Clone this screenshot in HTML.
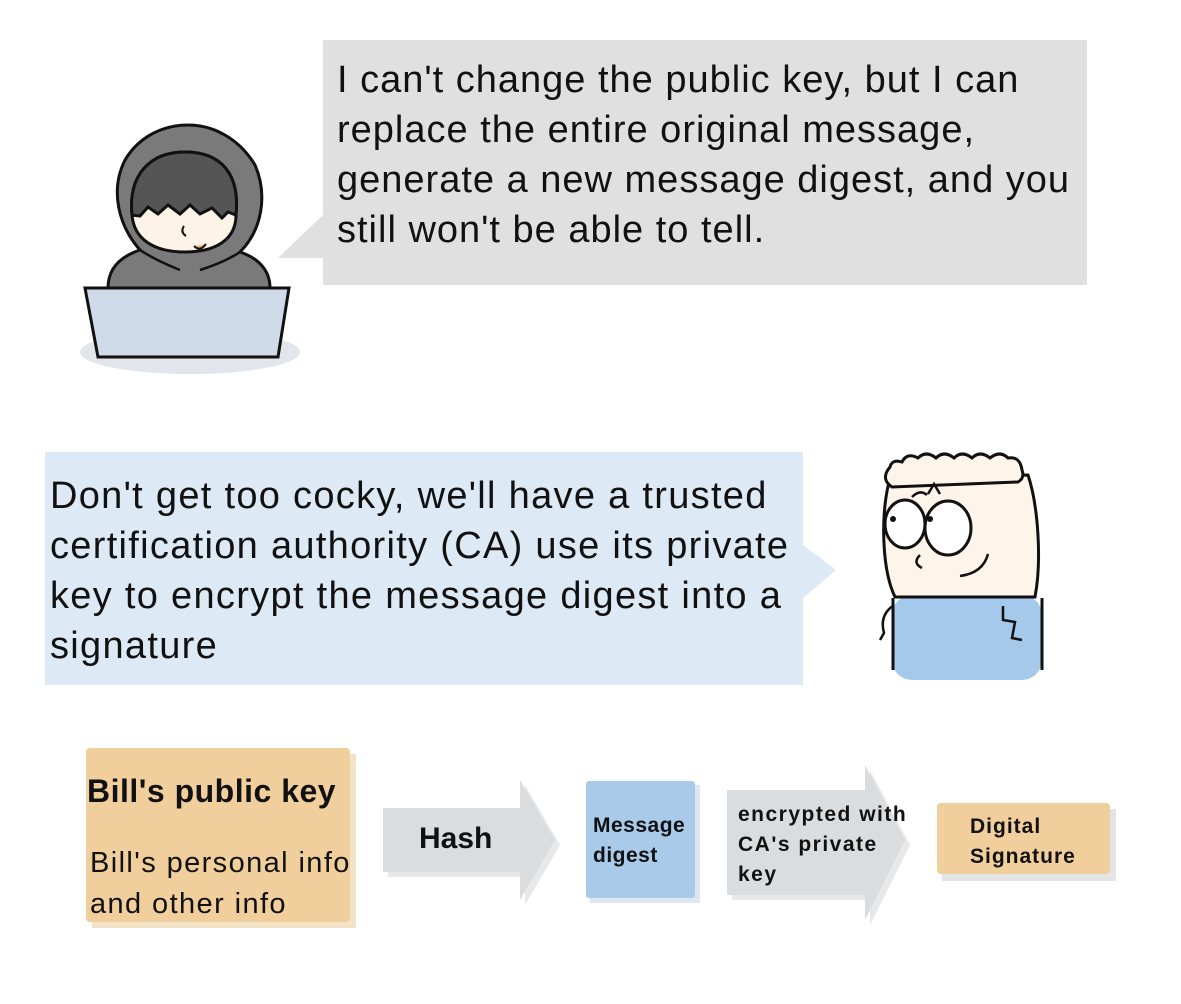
<!DOCTYPE html>
<html><head><meta charset="utf-8"><style>
body{margin:0;width:1181px;height:1004px;background:#fff;position:relative;overflow:hidden;font-family:"Liberation Sans","DejaVu Sans",sans-serif}
.t{position:absolute;font-size:38px;line-height:50px;color:#111;white-space:nowrap;letter-spacing:1px}
.b{position:absolute;font-weight:bold;color:#111;white-space:nowrap}
</style></head><body>
<svg width="1181" height="1004" style="position:absolute;left:0;top:0">
<rect x="323" y="40" width="764" height="245" fill="#e0e0e0"/>
<polygon points="323,215 278,258 323,258" fill="#e0e0e0"/>
<rect x="45" y="452" width="758" height="233" fill="#dde9f5"/>
<polygon points="803,545 836,570 803,598" fill="#dde9f5"/>
<!-- hacker -->
<ellipse cx="190" cy="352" rx="110" ry="22" fill="#e2e6ea"/>
<path d="M108,288 C108,265 125,255 140,250 C118,225 110,190 125,160 C140,135 165,125 188,125 C215,125 240,140 255,165 C268,195 262,230 240,252 C258,258 270,270 270,288 Z" fill="#7a7a7a" stroke="#111" stroke-width="3"/>
<path d="M132,215 C128,175 150,152 185,152 C222,152 240,175 236,215 C236,240 215,252 185,252 C155,252 134,240 132,215 Z" fill="#fdf3e6" stroke="#111" stroke-width="3"/>
<path d="M132,215 C128,175 150,152 185,152 C222,152 240,175 236,215 L228,212 L222,218 L212,208 L200,214 L190,205 L180,214 L168,205 L158,214 L148,207 L140,216 Z" fill="#555" stroke="#111" stroke-width="3"/>
<path d="M140,250 q15,10 40,20 M240,252 q-15,10 -40,18" fill="none" stroke="#111" stroke-width="2.5"/>
<path d="M184,226 q-4,6 2,10" fill="none" stroke="#111" stroke-width="2"/>
<path d="M194,246 q6,6 12,-2" fill="#f0c080" stroke="#111" stroke-width="2"/>
<polygon points="85,288 289,288 278,357 98,357" fill="#cfdbe8" stroke="#111" stroke-width="3"/>
<!-- boy -->
<rect x="892" y="595" width="150" height="85" rx="20" fill="#a5c9ea"/>
<path d="M893,598 L893,670 M1042,598 L1042,670" stroke="#111" stroke-width="3"/>
<path d="M890,478 C880,515 882,570 895,597 L1035,597 C1042,560 1038,505 1028,475 Z" fill="#fdf5ea" stroke="#111" stroke-width="3"/>
<path d="M892,487 q-12,-8 -2,-20 q2,-8 12,-5 q5,-10 16,-4 q8,-8 18,0 q8,-8 18,0 q8,-8 18,0 q8,-8 18,0 q10,-8 18,0 q12,-2 14,12 q3,8 -4,12 Z" fill="#fdf5ea" stroke="#111" stroke-width="3"/>
<path d="M912,497 q8,-8 15,-2 M928,494 l6,-10 l6,10" fill="none" stroke="#111" stroke-width="2.5"/>
<ellipse cx="905" cy="524" rx="20" ry="24" fill="#fff" stroke="#111" stroke-width="3"/>
<ellipse cx="948" cy="528" rx="23" ry="27" fill="#fff" stroke="#111" stroke-width="3"/>
<circle cx="893" cy="519" r="3" fill="#111"/><circle cx="930" cy="519" r="3" fill="#111"/>
<path d="M920,555 q-8,8 2,13" fill="none" stroke="#111" stroke-width="2.5"/>
<path d="M960,576 q23,-3 28,-22" fill="none" stroke="#111" stroke-width="2.5"/>
<path d="M1003,606 L1003,620 L1015,622 L1012,638 L1022,640" fill="none" stroke="#111" stroke-width="2.5"/>
<path d="M894,605 q-15,10 -10,28 L880,640" fill="none" stroke="#111" stroke-width="2.5"/>
<!-- diagram -->
<rect x="92" y="754" width="264" height="174" fill="#f2e2c6"/>
<rect x="86" y="748" width="264" height="174" rx="4" fill="#f0cf9c"/>
<polygon points="388,813 525,813 525,785 560,845 525,905 525,877 388,877" fill="#e8e8e8"/>
<polygon points="383,808 520,808 520,780 555,840 520,900 520,872 383,872" fill="#d9dde0"/>
<rect x="590" y="785" width="110" height="118" fill="#dfe7ee"/>
<rect x="586" y="781" width="109" height="117" rx="3" fill="#a9cbe9"/>
<polygon points="732,795 870,795 870,770 910,845 870,925 870,900 732,900" fill="#e8e8e8"/>
<polygon points="727,790 865,790 865,765 905,840 865,920 865,895 727,895" fill="#d9dde0"/>
<rect x="942" y="809" width="174" height="72" fill="#e4e4e4"/>
<rect x="937" y="803" width="173" height="71" rx="4" fill="#f0cf9c"/>
</svg>
<div class="t" style="left:337px;top:55px">I can't change the public key, but I can<br>replace the entire original message,<br>generate a new message digest, and you<br>still won't be able to tell.</div>
<div class="t" style="left:50px;top:471px;letter-spacing:1.3px">Don't get too cocky, we'll have a trusted<br>certification authority (CA) use its private<br>key to encrypt the message digest into a<br>signature</div>
<div class="b" style="left:87px;top:773px;font-size:32px;letter-spacing:0.5px">Bill's public key</div>
<div class="t" style="left:90px;top:843px;font-size:29px;line-height:41px;letter-spacing:1.4px">Bill's personal info<br>and other info</div>
<div class="b" style="left:419px;top:822px;font-size:30px">Hash</div>
<div class="b" style="left:593px;top:811px;font-size:21px;line-height:30px;letter-spacing:0.5px">Message<br>digest</div>
<div class="b" style="left:738px;top:800px;font-size:21px;line-height:30px;letter-spacing:1.5px">encrypted with<br>CA's private<br>key</div>
<div class="b" style="left:970px;top:812px;font-size:21px;line-height:30px;letter-spacing:1px">Digital<br>Signature</div>
</body></html>
